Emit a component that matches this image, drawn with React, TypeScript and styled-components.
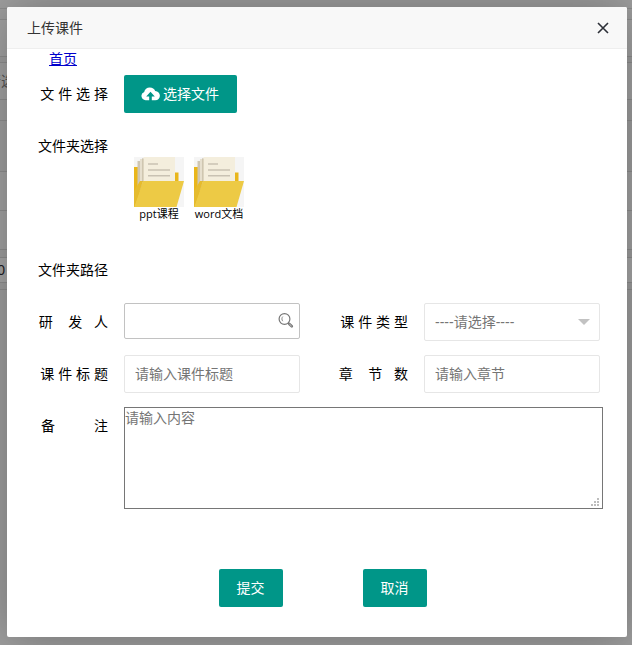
import React from "react";
import styled, { createGlobalStyle } from "styled-components";

const GlobalStyle = createGlobalStyle`
  * { box-sizing: border-box; }
  body {
    margin: 0;
    background: #9f9f9f;
    color: #000;
    font: 14px/20px "Liberation Sans", "Noto Sans CJK SC", sans-serif;
  }
  button, input, select, textarea { font: inherit; }
`;

const Page = styled.div`
  position: relative;
  min-height: 100vh;
  padding: 7px 5px 8px 7px;
  overflow: hidden;
`;

const Behind = styled.div`
  position: absolute;
  inset: 0;
  display: flex;
  flex-direction: column;
  padding-top: 8px;
  overflow: hidden;
`;

const Band = styled.div<{ $h: number; $tone?: string }>`
  flex: none;
  display: flex;
  align-items: center;
  height: ${(p) => p.$h}px;
  border-top: 1px solid #8f8f8f;
  background: ${(p) => p.$tone ?? "transparent"};
  color: #555;
  white-space: nowrap;
`;

const Clipped = styled.span<{ $width: number; $color?: string }>`
  display: flex;
  justify-content: flex-end;
  width: ${(p) => p.$width}px;
  color: ${(p) => p.$color ?? "inherit"};
`;

const Dialog = styled.section`
  position: relative;
  background: #fff;
  border-radius: 2px;
  box-shadow: 1px 1px 50px rgba(0, 0, 0, 0.3);
`;

const Header = styled.header`
  display: flex;
  align-items: center;
  justify-content: space-between;
  height: 42px;
  padding: 0 17px 0 20px;
  background: #f8f8f8;
  border-bottom: 1px solid #eee;
  border-radius: 2px 2px 0 0;
`;

const Title = styled.h1`
  margin: 0;
  font-size: 14px;
  font-weight: 400;
  color: #333;
`;

const CloseButton = styled.button`
  display: flex;
  padding: 0;
  border: 0;
  background: none;
  cursor: pointer;
`;

const Form = styled.form`
  display: flex;
  flex-direction: column;
  gap: 14px;
  padding: 0 24px 30px 7px;
`;

const HomeLink = styled.a`
  align-self: flex-start;
  margin: 0 0 -8px 35px;
  color: #0000cc;
`;

const Row = styled.div<{ $minHeight?: number }>`
  display: flex;
  align-items: flex-start;
  min-height: ${(p) => p.$minHeight ?? 38}px;
`;

const Columns = styled.div`
  display: grid;
  grid-template-columns: 1fr 1fr;
  gap: 14px;
  margin-right: 3px;
`;

const labelStyle = `
  flex: none;
  width: 110px;
  padding: 9px 16px 9px 8px;
  text-align: right;
  white-space: pre;
`;

const Label = styled.label`
  ${labelStyle}
`;

const Caption = styled.span`
  ${labelStyle}
`;

const Button = styled.button`
  display: flex;
  align-items: center;
  gap: 3px;
  height: 38px;
  padding: 0 18px 0 17px;
  border: 0;
  border-radius: 2px;
  background: #009688;
  color: #fff;
  white-space: nowrap;
  cursor: pointer;
`;

const Field = styled.div`
  position: relative;
  flex: 1;
  min-width: 0;
`;

const Input = styled.input<{ $lookup?: boolean }>`
  display: block;
  width: 100%;
  height: ${(p) => (p.$lookup ? 36 : 38)}px;
  padding: 0 ${(p) => (p.$lookup ? 28 : 10)}px 0 10px;
  border: 1px solid ${(p) => (p.$lookup ? "#c2c2c2" : "#e6e6e6")};
  border-radius: 2px;
  background: #fff;
  &::placeholder { color: #757575; opacity: 1; }
`;

const Select = styled.select`
  display: block;
  width: 100%;
  height: 38px;
  padding: 0 28px 0 10px;
  border: 1px solid #e6e6e6;
  border-radius: 2px;
  background: #fff;
  color: #757575;
  appearance: none;
`;

const Arrow = styled.svg`
  position: absolute;
  top: 16px;
  right: 10px;
  pointer-events: none;
`;

const SearchButton = styled.button`
  position: absolute;
  top: 9px;
  right: 6px;
  display: flex;
  padding: 0;
  border: 0;
  background: none;
  cursor: pointer;
`;

const Textarea = styled.textarea`
  display: block;
  width: 100%;
  height: 102px;
  padding: 0;
  border: 1px solid #767676;
  background: #fff;
  resize: none;
  &::placeholder { color: #757575; opacity: 1; }
`;

const Grip = styled.svg`
  position: absolute;
  right: 4px;
  bottom: 3px;
  pointer-events: none;
`;

const Folders = styled.div`
  display: flex;
  gap: 10px;
  padding: 30px 0 0 10px;
`;

const FolderButton = styled.button`
  display: flex;
  flex-direction: column;
  align-items: center;
  width: 50px;
  padding: 0;
  border: 0;
  background: none;
  color: #000;
  cursor: pointer;
`;

const FolderName = styled.span`
  font: 11px/14px "Open Sans", "Noto Sans CJK SC", sans-serif;
  white-space: nowrap;
`;

const Actions = styled.div`
  display: flex;
  justify-content: center;
  gap: 80px;
  margin: 46px -24px 0 5px;

  ${Button} {
    justify-content: center;
    width: 64px;
  }
`;

const CloseIcon = () => (
  <svg width="14" height="14" viewBox="0 0 14 14" fill="none" stroke="#2d3038" strokeWidth="1.6" aria-hidden="true">
    <path d="M2 2l10 10M12 2L2 12" />
  </svg>
);

const UploadIcon = () => (
  <svg width="19" height="14" viewBox="0 0 19 14" aria-hidden="true">
    <path
      fill="#fff"
      d="M4.600 13.200A4.300 4.300 0 0 1 3.200 4.900C3.600 2.300 5.900.4 8.800.4c2.600 0 4.600 1.400 5.400 3.600 2.800.2 4.700 2.200 4.700 4.700 0 2.600-2 4.500-4.600 4.500z"
    />
    <path fill="#009688" d="M9.500 4.800l4.300 4.700h-3V14H8.200V9.500h-3z" />
  </svg>
);

const SearchIcon = () => (
  <svg width="17" height="17" viewBox="0 0 17 17" fill="none" aria-hidden="true">
    <circle cx="7.500" cy="7" r="5.400" stroke="#777" strokeWidth="1.200" />
    <path d="M5.800 4.600C4.600 5.700 4.600 8 5.800 9.200" stroke="#888" />
    <path d="M11.300 11l1 1" stroke="#777" strokeWidth="1.200" />
    <path d="M12.300 12l2.500 2.300" stroke="#777" strokeWidth="2.600" strokeLinecap="round" />
    <path d="M12.400 12.100l2.200 2" stroke="#ddd" strokeWidth="0.800" />
  </svg>
);

const FolderIcon = () => (
  <svg width="50" height="50" viewBox="0 0 50 50" aria-hidden="true">
    <path fill="#f5f5f5" d="M0 0h50v50H0z" />
    <path fill="#e9b61b" d="M0 10h6v40H0zM41 15.500h3.500V26H41z" />
    <path fill="#cfc6b2" d="M3.500 4h5v30h-5z" />
    <path fill="#e6dfce" d="M6 2h4v26H6z" />
    <path fill="#bdb29c" d="M8 1.500h2V25H8z" />
    <path fill="#f4eedd" d="M9.500 0H41v26H9.500z" />
    <path fill="#e2d9c4" d="M8.500 2h1v22h-1z" />
    <path stroke="#c9c2b3" strokeWidth="1.600" d="M14 7h10M14 13h22M14 18.800h22" />
    <path fill="#edca45" d="M9 24h41l-7.500 26H0z" />
    <path fill="#e5bb2e" d="M0 34v16l6-17 3-9H6z" />
  </svg>
);

const folders = ["ppt课程", "word文档"];

export default function App() {
  return (
    <>
      <GlobalStyle />
      <Page>
        <Behind aria-hidden="true">
          <Band $h={11} />
          <Band $h={37} $tone="#a3a3a3" />
          <Band $h={6} />
          <Band $h={37} $tone="#a3a3a3"><Clipped $width={15}>请选</Clipped></Band>
          <Band $h={21} />
          <Band $h={51} />
          <Band $h={39} $tone="#a3a3a3" />
          <Band $h={39} $tone="#a3a3a3" />
          <Band $h={8} />
          <Band $h={25} $tone="#a8a8a8"><Clipped $width={5} $color="#1c1c24">0</Clipped></Band>
          <Band $h={7} />
          <Band $h={356} />
        </Behind>
        <Dialog role="dialog" aria-labelledby="dialog-title">
          <Header>
            <Title id="dialog-title">上传课件</Title>
            <CloseButton type="button" aria-label="关闭"><CloseIcon /></CloseButton>
          </Header>
          <Form onSubmit={(e) => e.preventDefault()}>
            <HomeLink href="#">首页</HomeLink>
            <Row>
              <Caption>文 件 选 择</Caption>
              <Button type="button"><UploadIcon />选择文件</Button>
            </Row>
            <Row $minHeight={110}>
              <Caption>文件夹选择</Caption>
              <Folders>
                {folders.map((name) => (
                  <FolderButton type="button" key={name}>
                    <FolderIcon />
                    <FolderName>{name}</FolderName>
                  </FolderButton>
                ))}
              </Folders>
            </Row>
            <Row>
              <Caption>文件夹路径</Caption>
            </Row>
            <Columns>
              <Row>
                <Label htmlFor="developer">{"研\u00a0\u00a0\u00a0\u00a0发\u00a0\u00a0\u00a0人"}</Label>
                <Field>
                  <Input id="developer" type="text" $lookup />
                  <SearchButton type="button" aria-label="搜索"><SearchIcon /></SearchButton>
                </Field>
              </Row>
              <Row>
                <Label htmlFor="kind">课 件 类 型</Label>
                <Field>
                  <Select id="kind" defaultValue="">
                    <option value="">----请选择----</option>
                  </Select>
                  <Arrow width="12" height="6" viewBox="0 0 12 6" aria-hidden="true">
                    <path d="M0 0h12L6 6z" fill="#c2c2c2" />
                  </Arrow>
                </Field>
              </Row>
              <Row>
                <Label htmlFor="name">课 件 标 题</Label>
                <Field><Input id="name" type="text" placeholder="请输入课件标题" /></Field>
              </Row>
              <Row>
                <Label htmlFor="chapters">{"章\u00a0\u00a0\u00a0\u00a0节\u00a0\u00a0\u00a0数"}</Label>
                <Field><Input id="chapters" type="text" placeholder="请输入章节" /></Field>
              </Row>
            </Columns>
            <Row>
              <Label htmlFor="remark">{"备" + "\u00a0".repeat(10) + "注"}</Label>
              <Field>
                <Textarea id="remark" placeholder="请输入内容" />
                <Grip width="8" height="8" viewBox="0 0 8 8" aria-hidden="true">
                  <path fill="#bdbdbd" d="M6 0h2v2H6zM3 3h2v2H3zM6 3h2v2H6zM0 6h2v2H0zM3 6h2v2H3zM6 6h2v2H6z" />
                </Grip>
              </Field>
            </Row>
            <Actions>
              <Button type="submit">提交</Button>
              <Button type="button">取消</Button>
            </Actions>
          </Form>
        </Dialog>
      </Page>
    </>
  );
}
